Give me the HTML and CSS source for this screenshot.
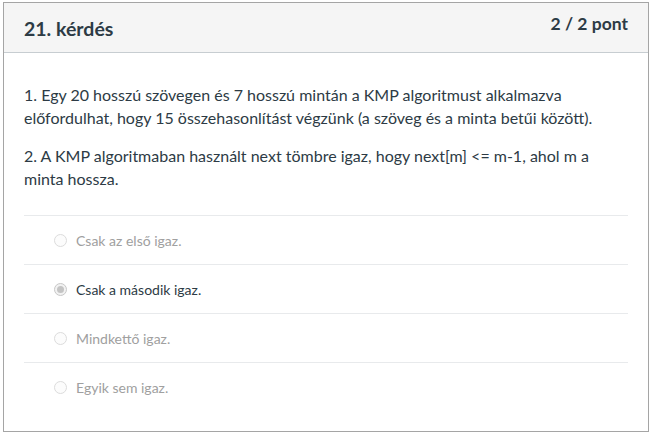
FILE: index.html
```html
<!DOCTYPE html>
<html lang="hu">
<head>
<meta charset="utf-8">
<link rel="stylesheet" href="styles.css">
</head>
<body>
<div class="question">
  <div class="header">
    <span class="title">21. kérdés</span>
    <span class="points">2 / 2 pont</span>
  </div>
  <div class="content">
    <div class="text">
      <p>1. Egy 20 hosszú szövegen és 7 hosszú mintán a KMP algoritmust alkalmazva előfordulhat, hogy 15 összehasonlítást végzünk (a szöveg és a minta betűi között).</p>
      <p>2. A KMP algoritmaban használt next tömbre igaz, hogy next[m] &lt;= m-1, ahol m a minta hossza.</p>
    </div>
    <div class="answers">
      <div class="answer"><span class="radio"></span><span class="label">Csak az első igaz.</span></div>
      <div class="answer selected"><span class="radio"></span><span class="label">Csak a második igaz.</span></div>
      <div class="answer"><span class="radio"></span><span class="label">Mindkettő igaz.</span></div>
      <div class="answer"><span class="radio"></span><span class="label">Egyik sem igaz.</span></div>
    </div>
  </div>
</div>
</body>
</html>
```
FILE: styles.css
```css
html, body {
  margin: 0;
  padding: 0;
  background: #fff;
}
body {
  font-family: Lato, "Noto Sans", sans-serif;
  color: #2d3b45;
}
.question {
  margin: 2px 0 0 3px;
  width: 644px;
  height: 428px;
  border: 1px solid #a5a5a5;
}
.header {
  height: 49px;
  background: #f5f5f5;
  border-bottom: 1px solid #c7cdd1;
  display: flex;
  justify-content: space-between;
  align-items: flex-start;
  padding: 0 20px;
}
.title {
  font-size: 19.5px;
  font-weight: bold;
  margin-top: 14px;
}
.points {
  font-size: 17.5px;
  font-weight: bold;
  margin-top: 10px;
}
.content {
  padding: 0 20px;
}
.text {
  padding-top: 31px;
  padding-bottom: 25px;
  border-bottom: 1px solid #e8eaec;
}
.text p {
  margin: 0 0 16px;
  font-size: 16px;
  line-height: 22.5px;
}
.text p:last-child {
  margin-bottom: 0;
}
.answer {
  height: 48px;
  border-bottom: 1px solid #e8eaec;
  display: flex;
  align-items: center;
  padding-left: 30px;
  font-size: 14px;
  color: #a0a0a0;
}
.answer:last-child {
  border-bottom: none;
}
.radio {
  width: 11px;
  height: 11px;
  border: 1px solid #dcdcdc;
  border-radius: 50%;
  background: #fcfcfc;
  margin-right: 9px;
  box-sizing: content-box;
  display: flex;
  align-items: center;
  justify-content: center;
}
.selected {
  color: #2d3b45;
}
.selected .radio {
  border-color: #c8c8c8;
  background: #f2f2f2;
}
.selected .radio::after {
  content: "";
  width: 7px;
  height: 7px;
  border-radius: 50%;
  background: #c4c4c4;
}
```
